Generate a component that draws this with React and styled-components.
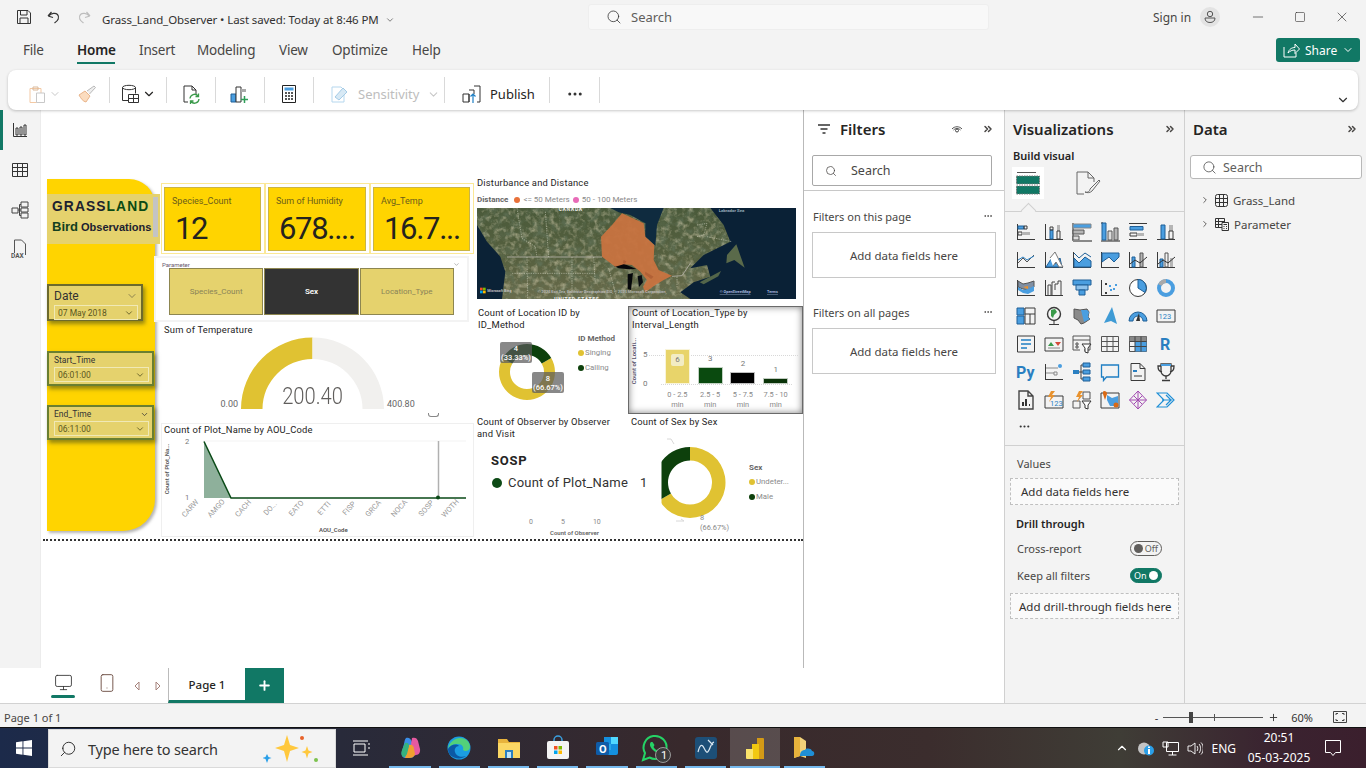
import React from 'react';
import styled, { createGlobalStyle } from 'styled-components';
import { ChevronDown, ChevronRight, ChevronsRight, Search, Minus, Square, X, MoreHorizontal, Plus, Monitor, Smartphone, ChevronUp } from 'lucide-react';

const UI = '"Noto Sans", "Open Sans", sans-serif';
const DIN = 'Roboto, "Noto Sans", sans-serif';
const GREEN = '#117865';
const BLUE = '#4a9ee0';
const DARK = '#3a3a3a';
const GREY = '#b5b5b5';

const Global = createGlobalStyle`
  html, body { margin: 0; padding: 0; height: 100%; overflow: hidden; background: #f3f3f3; }
  * { box-sizing: border-box; }
  body { font-family: ${UI}; color: #252423; }
`;

const Shell = styled.div`
  width: 1366px;
  height: 768px;
  display: flex;
  flex-direction: column;
  background: #f3f3f3;
  overflow: hidden;
`;

/* ---------- title bar ---------- */
const TitleBar = styled.div`
  height: 34px;
  flex: none;
  display: flex;
  align-items: center;
  padding-left: 16px;
`;
const QuickIcons = styled.div`
  display: flex;
  gap: 14px;
  width: 86px;
  align-items: center;
`;
const DocName = styled.div`
  width: 486px;
  padding-top: 5px;
  font-size: 11.5px;
  color: #323130;
  display: flex;
  align-items: center;
  gap: 6px;
  letter-spacing: -0.1px;
`;
const TopSearch = styled.div`
  width: 401px;
  height: 26px;
  background: #f8f8f8;
  border: 1px solid #eeeeee;
  border-radius: 3px;
  display: flex;
  align-items: center;
  gap: 9px;
  padding-left: 17px;
  font-size: 13px;
  color: #605e5c;
`;
const SignIn = styled.div`
  margin-left: 164px;
  width: 97px;
  display: flex;
  align-items: center;
  gap: 9px;
  font-size: 12px;
  color: #484644;
`;
const Avatar = styled.div`
  width: 20px;
  height: 20px;
  border-radius: 50%;
  background: #e3e3e3;
  display: flex;
  align-items: center;
  justify-content: center;
`;
const WinButtons = styled.div`
  display: flex;
  gap: 28px;
  align-items: center;
  color: #323130;
`;

/* ---------- tabs ---------- */
const TabRow = styled.div`
  height: 36px;
  flex: none;
  display: flex;
  align-items: center;
  padding: 0 6px 4px 23px;
`;
const Tab = styled.div`
  position: relative;
  width: ${p => p.$w}px;
  font-size: 13.5px;
  letter-spacing: -0.2px;
  color: ${p => (p.$active ? '#252423' : '#484644')};
  font-weight: ${p => (p.$active ? 600 : 400)};
  &::after {
    content: '';
    display: ${p => (p.$active ? 'block' : 'none')};
    position: absolute;
    left: 0;
    top: 21px;
    width: 38px;
    height: 2px;
    background: ${GREEN};
  }
`;
const ShareButton = styled.div`
  margin-left: auto;
  width: 84px;
  height: 24px;
  background: ${GREEN};
  border-radius: 3px;
  color: #fff;
  font-size: 12px;
  display: flex;
  align-items: center;
  gap: 5px;
  padding-left: 7px;
`;

/* ---------- ribbon ---------- */
const Ribbon = styled.div`
  height: 40px;
  flex: none;
  margin: 0 8px;
  background: #fff;
  border-radius: 8px;
  box-shadow: 0 1px 3px rgba(0, 0, 0, 0.22);
  display: flex;
  align-items: center;
  position: relative;
  z-index: 2;
`;
const RibbonSlot = styled.div`
  width: ${p => p.$w}px;
  height: 26px;
  padding: 8px 0 0 ${p => p.$left || 0}px;
  display: flex;
  align-items: center;
  justify-content: ${p => (p.$left ? 'flex-start' : 'center')};
  gap: ${p => p.$gap || 2}px;
  border-right: 1px solid #d9d9d9;
  font-size: 13px;
  color: ${p => (p.$faded ? '#bdbdbd' : '#252423')};
`;
const PainterSlot = styled.div`
  margin-left: 14px;
`;
const RibbonCollapse = styled.div`
  position: absolute;
  right: 8px;
  bottom: -2px;
  color: #333;
`;

/* ---------- workspace ---------- */
const Workspace = styled.div`
  flex: 1;
  display: flex;
  min-height: 0;
`;
const Rail = styled.div`
  width: 41px;
  flex: none;
  background: #f3f3f3;
  border-right: 1px solid #ececec;
  display: flex;
  flex-direction: column;
  position: relative;
`;
const RailItem = styled.div`
  height: 40px;
  display: flex;
  align-items: center;
  justify-content: center;
`;
const RailMark = styled.div`
  position: absolute;
  left: 0;
  top: 0;
  width: 3px;
  height: 40px;
  background: ${GREEN};
`;
const Main = styled.div`
  width: 963px;
  display: flex;
  flex-direction: column;
  background: #fff;
`;
const MainTop = styled.div`
  flex: 1;
  display: flex;
  min-height: 0;
`;
const Canvas = styled.div`
  width: 763px;
  position: relative;
  background: #fff;
  border-right: 1px solid #b9b9b9;
  height: 558px;
`;
const FiltersPane = styled.div`
  width: 200px;
  background: #fff;
  padding-top: 8px;
`;
const PaneHead = styled.div`
  display: flex;
  align-items: center;
  height: 22px;
  padding: ${p => p.$pad || '0 8px 0 8px'};
  font-size: ${p => p.$size || 15}px;
  font-weight: 600;
  color: #252423;
  gap: ${p => p.$gap || 0}px;
`;
const PushRight = styled.div`
  margin-left: auto;
  display: flex;
  align-items: center;
  gap: ${p => p.$gap || 0}px;
  color: #484644;
`;
const FilterSearch = styled.div`
  margin: 15px 12px 0 8px;
  height: 31px;
  border: 1px solid #a8a8a8;
  border-radius: 2px;
  display: flex;
  align-items: center;
  gap: 14px;
  padding-left: 12px;
  font-size: 12.5px;
  color: #484644;
`;
const FilterRule = styled.div`
  margin-top: 4px;
  height: 1px;
  background: #c8c8c8;
`;
const FilterSection = styled.div`
  display: flex;
  align-items: center;
  justify-content: space-between;
  padding: 0 11px 0 9px;
  height: 18px;
  margin-top: ${p => p.$top}px;
  font-size: 11px;
  color: #484644;
`;
const DropCard = styled.div`
  margin: 7px 8px 0;
  height: 46px;
  border: 1px solid #c8c8c8;
  display: flex;
  align-items: center;
  justify-content: center;
  font-size: 11.5px;
  color: #484644;
`;

const VizPane = styled.div`
  width: 181px;
  flex: none;
  border-left: 1px solid #d0d0d0;
  border-right: 1px solid #d0d0d0;
  padding-top: 8px;
`;
const DataPane = styled.div`
  width: 181px;
  flex: none;
  padding-top: 8px;
`;
const SubHead = styled.div`
  font-size: 11px;
  font-weight: 600;
  padding-left: ${p => p.$left || 8}px;
  margin-top: ${p => p.$top || 0}px;
`;
const BuildTabs = styled.div`
  margin: 4px 0 0 7px;
  display: flex;
  gap: 31px;
  align-items: center;
`;
const BuildActive = styled.div`
  width: 32px;
  height: 32px;
  background: #fff;
  display: flex;
  align-items: center;
  justify-content: center;
`;
const Notch = styled.div`
  height: 13px;
  position: relative;
  border-bottom: 1px solid #d0d0d0;
  &::after {
    content: '';
    position: absolute;
    left: 18px;
    bottom: -5px;
    width: 10px;
    height: 10px;
    background: #f3f3f3;
    border-top: 1px solid #d0d0d0;
    border-left: 1px solid #d0d0d0;
    transform: rotate(45deg);
  }
`;
const VizGrid = styled.div`
  display: grid;
  grid-template-columns: repeat(6, 28px);
  grid-auto-rows: 28px;
  padding: 6px 0 0 7px;
  align-items: center;
  justify-items: center;
`;
const VizDots = styled.div`
  height: 24px;
  padding-left: 13px;
  display: flex;
  align-items: center;
  color: #333;
`;
const VizRule = styled.div`
  margin-top: 7px;
  height: 1px;
  background: #d0d0d0;
`;
const DashedDrop = styled.div`
  margin: ${p => p.$top}px 5px 0;
  height: ${p => p.$h}px;
  background: #fafafa;
  border: 1px dashed #c0c0c0;
  display: flex;
  align-items: center;
  padding-left: ${p => p.$left || 10}px;
  font-size: 11.5px;
  color: #323130;
`;
const FieldLabel = styled.div`
  font-size: 11px;
  padding-left: 12px;
  color: #484644;
  margin-top: 10px;
`;
const ToggleRow = styled.div`
  display: flex;
  align-items: center;
  justify-content: space-between;
  padding: 0 22px 0 12px;
  height: 16px;
  margin-top: ${p => p.$top}px;
  font-size: 11px;
  color: #484644;
`;
const Toggle = styled.div`
  width: 32px;
  height: 15px;
  border-radius: 8px;
  border: 1px solid ${p => (p.$on ? GREEN : '#605e5c')};
  background: ${p => (p.$on ? GREEN : '#f3f3f3')};
  color: ${p => (p.$on ? '#fff' : '#605e5c')};
  font-size: 9px;
  line-height: 13px;
  display: flex;
  align-items: center;
  flex-direction: ${p => (p.$on ? 'row' : 'row-reverse')};
  justify-content: space-between;
  padding: 0 3px;
  &::after {
    content: '';
    width: 9px;
    height: 9px;
    border-radius: 50%;
    background: ${p => (p.$on ? '#fff' : '#605e5c')};
  }
`;
const DataSearch = styled.div`
  margin: 15px 4px 0 5px;
  height: 24px;
  background: #fff;
  border: 1px solid #b8b8b8;
  border-radius: 3px;
  display: flex;
  align-items: center;
  gap: 6px;
  padding-left: 11px;
  font-size: 12.5px;
  color: #605e5c;
`;
const TreeRow = styled.div`
  display: flex;
  align-items: center;
  gap: 5px;
  height: 24px;
  margin-top: ${p => p.$top || 0}px;
  padding-left: 15px;
  font-size: 11.5px;
  color: #484644;
`;

/* ---------- report visuals, placed on the report canvas ---------- */
const Visual = styled.div`
  position: absolute;
  left: ${p => p.$x - 41}px;
  top: ${p => p.$y - 110}px;
  width: ${p => p.$w}px;
  height: ${p => p.$h}px;
`;
const SidePanel = styled(Visual)`
  background: #ffd400;
  border-radius: 0 26px 32px 0;
  box-shadow: 2px 2px 3px rgba(90, 90, 90, 0.45);
  padding-top: 15px;
  font-family: ${DIN};
`;
const Brand = styled.div`
  width: 113px;
  height: 50px;
  background: #e5d26d;
  padding: 5px 0 0 5px;
  position: relative;
  &::after {
    content: '';
    position: absolute;
    right: 2px;
    top: 3px;
    width: 5px;
    height: 40px;
    background: #c4c4c4;
  }
`;
const BrandTop = styled.div`
  font: bold 13.8px "Liberation Sans", sans-serif;
  letter-spacing: 1.1px;
  color: #1c2130;
  span { color: #0a4a14; }
`;
const BrandSub = styled.div`
  margin-top: 5px;
  font: bold 11px "Liberation Sans", sans-serif;
  color: #1c2130;
  b { font-size: 13px; color: #123f20; margin-right: 3px; }
`;
const Slicer = styled.div`
  margin-top: ${p => p.$top}px;
  width: ${p => p.$w}px;
  height: ${p => p.$h}px;
  background: #e5d26d;
  border: 2px solid ${p => p.$line};
  box-shadow: 2px 3px 4px rgba(60, 70, 30, 0.55);
  padding: 0 3px 0 5px;
  color: #2a2a2a;
`;
const SlicerHead = styled.div`
  display: flex;
  justify-content: space-between;
  align-items: center;
  font-size: ${p => p.$size}px;
  height: ${p => p.$h}px;
  color: #333;
`;
const SlicerInput = styled.div`
  height: ${p => p.$h || 15}px;
  border: 1px solid #f0e9b6;
  display: flex;
  justify-content: space-between;
  align-items: center;
  padding: 0 3px;
  font-size: 8.5px;
  color: #5a5620;
`;
const CardFrame = styled(Visual)`
  border: 1px solid #fbe896;
  padding: 3px 3px 2px 2px;
  display: flex;
`;
const KpiCard = styled.div`
  flex: 1;
  background: #ffd400;
  border: 1px solid #c9b445;
  padding: 8px 0 0 7px;
  font-family: ${DIN};
`;
const KpiName = styled.div`
  font-size: 9px;
  color: #6b5d1c;
`;
const KpiValue = styled.div`
  font-size: 31px;
  line-height: 36px;
  margin: 5px 0 0 3px;
  color: #24231f;
  white-space: nowrap;
  letter-spacing: -1.3px;
`;
const ParamBox = styled(Visual)`
  background: #fff;
  border: 2px solid #f3f3f3;
  font-family: ${DIN};
`;
const ParamHead = styled.div`
  display: flex;
  justify-content: space-between;
  font-size: 6px;
  padding: 3px 7px 0 6px;
  height: 10px;
  color: #6a5a70;
`;
const ParamButtons = styled.div`
  display: flex;
  gap: 1px;
  margin: 0 0 0 13px;
  width: 285px;
  height: 47px;
`;
const ParamButton = styled.div`
  flex: 1;
  border: 1px solid #8d8650;
  background: ${p => (p.$on ? '#333333' : '#e5d26d')};
  color: ${p => (p.$on ? '#fff' : '#8a8458')};
  font-size: 8px;
  font-weight: ${p => (p.$on ? 600 : 400)};
  display: flex;
  align-items: center;
  justify-content: center;
`;
const VisualTitle = styled.div`
  font: 400 9.4px/12px ${DIN};
  letter-spacing: 0.2px;
  color: #252423;
  margin-bottom: ${p => p.$after || 0}px;
`;
const GaugeRow = styled.div`
  display: flex;
  align-items: flex-end;
  margin-top: 1px;
  padding-left: 56.5px;
  font-family: ${DIN};
  font-size: 9px;
  color: #666;
  gap: 3px;
`;
const GaugeWrap = styled.div`
  position: relative;
  width: 143px;
  height: 72px;
`;
const GaugeValue = styled.div`
  position: absolute;
  left: 0;
  right: 0;
  bottom: -1px;
  text-align: center;
  font: 300 24px/28px ${DIN};
  color: #605e5c;
  transform: scaleX(0.84);
`;
const GaugeEdge = styled.span`
  line-height: 9px;
`;
const ChartBox = styled(Visual)`
  border: 1px solid #efefef;
  padding-left: 2px;
  font-family: ${DIN};
`;
const MapLegend = styled.div`
  display: flex;
  align-items: center;
  gap: 3px;
  margin-top: 6px;
  font: 400 8px/9px ${DIN};
  color: #8a8a8a;
  b { color: #666; margin-right: 3px; }
`;
const Dot = styled.i`
  display: inline-block;
  flex: none;
  width: ${p => p.$size || 6}px;
  height: ${p => p.$size || 6}px;
  border-radius: 50%;
  background: ${p => p.$c};
`;
const MapFrame = styled.svg`
  display: block;
  margin-top: 4px;
`;
const Legend = styled.div`
  position: absolute;
  left: ${p => p.$x}px;
  top: ${p => p.$y}px;
  font: 400 7.8px/15px ${DIN};
  color: #8a8a8a;
  b { display: block; color: #666; font-size: 8px; line-height: 13px; }
`;
const LegendItem = styled.div`
  display: flex;
  align-items: center;
  gap: 1px;
`;
const DataTag = styled.div`
  position: absolute;
  left: ${p => p.$x}px;
  top: ${p => p.$y}px;
  width: 32px;
  height: 21px;
  background: rgba(90, 90, 90, 0.72);
  border-radius: 2px;
  color: #fff;
  font: 500 7.5px/9px ${DIN};
  text-align: center;
  padding-top: 2px;
`;
const BarBox = styled(Visual)`
  border: 1px solid #6a6a6a;
  box-shadow: inset 0 0 7px rgba(0, 0, 0, 0.5);
  padding: 0 3px;
  font-family: ${DIN};
`;
const BarAxisName = styled.div`
  position: absolute;
  left: -20px;
  top: 50px;
  width: 50px;
  text-align: center;
  transform: rotate(-90deg);
  font: 600 6px/8px ${DIN};
  color: #55506a;
  white-space: nowrap;
`;
const BarPlot = styled.div`
  position: absolute;
  left: 32px;
  top: 34px;
  width: 131px;
  height: 44px;
  display: flex;
  align-items: flex-end;
  border-bottom: 1px dotted #d8d8d8;
  &::before {
    content: '';
    position: absolute;
    left: -12px;
    right: -6px;
    top: 14px;
    border-top: 1px dotted #d8d8d8;
  }
`;
const BarSlot = styled.div`
  flex: 1;
  display: flex;
  flex-direction: column;
  align-items: center;
  justify-content: flex-end;
  position: relative;
  font-size: 8px;
  color: #777;
`;
const BarFill = styled.div`
  width: 25px;
  height: ${p => p.$h}px;
  background: ${p => p.$c};
  border: 1px solid rgba(255, 255, 255, 0.75);
  margin-top: 4px;
  display: flex;
  justify-content: center;
`;
const BarInnerTag = styled.div`
  margin-top: 4px;
  width: 13px;
  height: 12px;
  background: #f2ecc4;
  border-radius: 2px;
  text-align: center;
  line-height: 12px;
  font-size: 8px;
  color: #777;
`;
const AxisTick = styled.div`
  position: absolute;
  left: 14px;
  top: ${p => p.$y}px;
  font-size: 8px;
  color: #777;
`;
const BarLabels = styled.div`
  position: absolute;
  left: 32px;
  top: 83px;
  width: 131px;
  display: flex;
  font: 400 7.4px/10px ${DIN};
  color: #888;
  text-align: center;
  span { flex: 1; }
`;
const ObsHead = styled.div`
  font: 700 13px/16px ${DIN};
  letter-spacing: 0.8px;
  color: #252423;
  padding: 13px 0 0 14px;
`;
const ObsRow = styled.div`
  display: flex;
  align-items: center;
  padding-left: 15px;
  margin-top: 6px;
  font: 400 13px/16px ${DIN};
  color: #333;
  letter-spacing: 0.2px;
  white-space: nowrap;
`;
const ObsName = styled.span`
  margin-left: 6px;
`;
const ObsCount = styled.span`
  margin-left: 12px;
`;
const ObsAxis = styled.div`
  display: flex;
  gap: 28px;
  margin: 27px 0 0 52px;
  font: 400 7px/9px ${DIN};
  color: #888;
`;
const ObsAxisName = styled.div`
  margin: 2px 0 0 73px;
  font: 600 6px/8px ${DIN};
  color: #666;
`;
const SexNote = styled.div`
  position: absolute;
  left: 69px;
  top: 97px;
  font: 400 7.4px/10px ${DIN};
  color: #888;
  span { display: block; }
`;
const ResizeHint = styled(Visual)`
  border: 1px solid #888;
  border-top: none;
  border-radius: 0 0 3px 3px;
`;
const PageEnd = styled(Visual)`
  border-top: 2px dotted #333;
`;

/* ---------- page tabs, status bar, taskbar ---------- */
const PageBar = styled.div`
  height: 35px;
  flex: none;
  background: #fff;
  display: flex;
  align-items: stretch;
  margin-left: -41px;
  padding-left: 51px;
  position: relative;
`;
const ViewButton = styled.div`
  width: 24px;
  margin-left: ${p => p.$gap || 0}px;
  display: flex;
  justify-content: center;
  padding-top: 5px;
  position: relative;
  color: #333;
  &::after {
    content: '';
    display: ${p => (p.$on ? 'block' : 'none')};
    position: absolute;
    left: 0;
    right: 0;
    bottom: 5px;
    height: 3px;
    border-radius: 2px;
    background: ${GREEN};
  }
`;
const PageNav = styled.div`
  display: flex;
  align-items: center;
  gap: 15px;
  padding-left: 15px;
  width: 49px;
`;
const PageTab = styled.div`
  width: 77px;
  border-left: 1px solid #bbb;
  border-bottom: 3px solid ${GREEN};
  display: flex;
  align-items: center;
  justify-content: center;
  font-size: 11.5px;
  font-weight: 500;
  color: #252423;
`;
const AddPage = styled.div`
  width: 39px;
  background: ${GREEN};
  color: #fff;
  display: flex;
  align-items: center;
  justify-content: center;
`;
const StatusBar = styled.div`
  height: 24px;
  flex: none;
  border-top: 1px solid #d2d2d2;
  background: #f3f3f3;
  display: flex;
  align-items: center;
  padding: 3px 19px 0 4px;
  font-size: 11px;
  color: #484644;
  position: relative;
`;
const ZoomBar = styled.div`
  margin-left: auto;
  display: flex;
  align-items: center;
  color: #333;
`;
const ZoomTrack = styled.div`
  width: 100px;
  height: 1px;
  background: #555;
  margin: 0 5px 0 5px;
  position: relative;
  &::before {
    content: '';
    position: absolute;
    left: 26px;
    top: -5px;
    width: 4px;
    height: 11px;
    background: #444;
  }
  &::after {
    content: '';
    position: absolute;
    left: 51px;
    top: -3px;
    width: 1px;
    height: 7px;
    background: #555;
  }
`;
const ZoomValue = styled.span`
  margin: 0 20px 0 12px;
`;
const Taskbar = styled.div`
  height: 41px;
  flex: none;
  background: linear-gradient(90deg, #1c2a4a 0, #282a3a 25%, #38292c 50%, #3b2d2d 68%, #3f3d36 82%, #3a2330 93%, #3b1f2d 100%);
  border-top: 1px solid #111;
  display: flex;
  align-items: stretch;
  color: #fff;
`;
const StartButton = styled.div`
  width: 48px;
  display: flex;
  align-items: center;
  justify-content: center;
`;
const TaskSearch = styled.div`
  width: 288px;
  margin-top: 1px;
  background: #f3f3f3;
  border: 1px solid #dadada;
  display: flex;
  align-items: center;
  gap: 11px;
  padding-left: 10px;
  font-size: 14.5px;
  letter-spacing: -0.2px;
  color: #333;
`;
const SparkleIcon = styled.svg`
  margin-left: 34px;
`;
const TaskApps = styled.div`
  display: flex;
`;
const TaskApp = styled.div`
  width: 49.3px;
  display: flex;
  align-items: center;
  justify-content: center;
  position: relative;
  background: ${p => (p.$active ? 'rgba(255,255,255,0.16)' : 'none')};
  &::after {
    content: '';
    display: ${p => (p.$open ? 'block' : 'none')};
    position: absolute;
    left: ${p => (p.$active ? 0 : 4)}px;
    right: ${p => (p.$active ? 0 : 4)}px;
    bottom: 0;
    height: 2px;
    background: #76b9ed;
  }
`;
const Tray = styled.div`
  margin-left: auto;
  display: flex;
  align-items: center;
  gap: 8px;
  padding-right: 25px;
  font-size: 12px;
`;
const ClockBox = styled.div`
  width: 70px;
  margin: 0 3px 0 0;
  text-align: center;
  font-size: 12px;
  line-height: 20px;
  white-space: nowrap;
`;

/* ---------- drawings ---------- */
const Ico = ({ s = 20, w, h, children, vb = '0 0 20 20' }) => (
  <svg width={w || s} height={h || s} viewBox={vb} fill="none" style={{ display: 'block', flex: 'none' }}>{children}</svg>
);

const SaveIcon = () => (
  <Ico s={16} vb="0 0 16 16"><path d="M1.5 1.5h10.500l2.500 2.500v10.500h-13z M4.500 1.500v4.500h6.500v-4.500 M4 14.500v-5.500h8v5.500" stroke="#333" /></Ico>
);
const UndoIcon = () => (
  <Ico s={16} vb="0 0 16 16"><path d="M2 7l3.500-4 M2 7l5 1.500 M2.500 7c3-3 7-3.500 9-1.500c2.500 3 .5 6-3 8.500" stroke="#333" strokeWidth="1.200" /></Ico>
);
const RedoIcon = () => (
  <Ico s={16} vb="0 0 16 16"><path d="M14 7l-3.500-4 M14 7l-5 1.500 M13.500 7c-3-3-7-3.500-9-1.500c-2.500 3-.5 6 3 8.500" stroke="#bdbdbd" strokeWidth="1.200" /></Ico>
);

const RailChart = () => (
  <Ico s={16} vb="0 0 16 16"><path d="M1.500 1v13.500h13.500 M4 13v-7h2v7z M8 13v-8h2v8z M12 13v-10h2v10z" stroke="#333" /></Ico>
);
const RailTable = () => (
  <Ico s={16} vb="0 0 16 16"><path d="M.5 1.500h15v13h-15z M.5 5.500h15 M.5 9.500h15 M5.500 1.500v13 M10.500 1.500v13" stroke="#333" /></Ico>
);
const RailModel = () => (
  <Ico s={18} vb="0 0 18 18"><path d="M1 7h6v5h-6z M10 1h7v5h-7z M10 7h7v4h-7z M10 12h7v5h-7z M7 9h3 M8.500 3.500v11 M8.500 3.500h1.500 M8.500 14.500h1.500" stroke="#444" /></Ico>
);
const RailDax = () => (
  <svg width="18" height="22" viewBox="0 0 18 22" fill="none" style={{ display: 'block' }}>
    <path d="M3.500 14v-13h7l4 4v11" stroke="#555" />
    <text x="0" y="19" fontFamily={DIN} fontSize="6.500" fontWeight="700" fill="#555">DAX</text>
  </svg>
);

const PasteIcon = () => (
  <Ico vb="0 0 20 20"><path d="M3 4.500h11v14h-11z" stroke="#f3c9a4" /><path d="M6 3h5v3h-5z" stroke="#d9b89a" /><path d="M9.500 9h8v9.500h-8z" stroke="#c8c8c8" fill="#fff" /></Ico>
);
const PainterIcon = () => (
  <Ico vb="0 0 20 20"><path d="M2 11l6-4 5 5-4 6c-3-.5-5-3.500-7-7z" fill="#fbdcbf" stroke="#e9b48a" /><path d="M10 7l7-5 1.500 1.500-6 6.500" stroke="#b9b9b9" fill="#eee" /></Ico>
);
const DataIcon = () => (
  <Ico vb="0 0 20 20"><ellipse cx="9" cy="3.500" rx="6.500" ry="2.200" stroke="#333" /><path d="M2.500 3.500v13h6 M15.500 3.500v6" stroke="#333" /><path d="M8.500 10.500h10v8h-10z M8.500 14.500h10 M13.500 10.500v8" stroke="#333" /></Ico>
);
const RefreshIcon = () => (
  <Ico vb="0 0 20 20"><path d="M7 18h-4v-16h8l4 4v5 M11 2v4h4" stroke="#333" /><path d="M9 14.500a4.500 4.500 0 0 1 8-2.500 M17.500 9.500v3h-3 M18 15a4.500 4.500 0 0 1-8 2.500 M9.500 20v-3h3" stroke="#3a9a4a" strokeWidth="1.300" /></Ico>
);
const NewVisualIcon = () => (
  <Ico vb="0 0 20 20"><path d="M1 10h5v8h-5z" fill={BLUE} stroke="#1f5f96" /><path d="M6 3h5v15h-5z" fill="#fff" stroke="#333" /><path d="M11 5h5v3h-5z" fill="#aaa" /><path d="M14.500 12v7 M11 15.500h7" stroke="#2f9e58" strokeWidth="1.500" /></Ico>
);
const CalcIcon = () => (
  <Ico vb="0 0 20 20"><path d="M3.500 1.500h13v17h-13z" stroke="#222" /><path d="M5.500 3.500h9v3h-9z" fill={BLUE} /><path d="M6 9h2M9 9h2M12 9h2M6 12h2M9 12h2M12 12h2M6 15h2M9 15h2M12 15h2" stroke="#222" strokeWidth="1.600" /></Ico>
);
const SensIcon = () => (
  <Ico vb="0 0 20 20"><path d="M2 3h9l3 3v12h-12z" stroke="#b5d7ee" /><path d="M5 13l8-9 4 4-8 8z" fill="#d7e9f5" stroke="#a4cbe6" /></Ico>
);
const PublishIcon = () => (
  <Ico vb="0 0 20 20"><path d="M1 10h6v8h-6z M7 6h5v4 M12 2h6v16h-3 M7 10v8" stroke="#333" /><path d="M11 19v-9 M8.500 12.500l2.500-2.500 2.500 2.500" stroke="#1f7fc4" strokeWidth="1.200" /></Ico>
);
const ShareIcon = () => (
  <Ico s={17} vb="0 0 17 17"><path d="M1 5v10h12v-4 M5 11c1-4 4-5.500 7-5.500v-3.500l4.500 5-4.500 4.500v-3.500c-3 0-5 1-7 3z" stroke="#fff" /></Ico>
);
const FilterIcon = () => (
  <Ico s={14} vb="0 0 14 14"><path d="M1 3h12M3.500 7h7M5.500 11h3" stroke="#333" strokeWidth="1.300" /></Ico>
);
const EyeIcon = () => (
  <Ico s={12} vb="0 0 12 12"><path d="M1 6c2.500-3 7.500-3 10 0M2.500 7c2-2 5-2 7 0" stroke="#555" /><circle cx="6" cy="7.500" r="1.500" stroke="#444" /></Ico>
);
const BuildIcon = () => (
  <Ico s={26} vb="0 0 26 26"><path d="M2 2.500h19" stroke="#555" /><path d="M1.500 6h23v8h-23z" fill={GREEN} stroke="#777" strokeDasharray="1.500 1" /><path d="M1.500 16h23v8h-23z" fill={GREEN} stroke="#777" strokeDasharray="1.500 1" /></Ico>
);
const FormatIcon = () => (
  <Ico s={26} vb="0 0 26 26"><path d="M9 24h-7v-22h11l6 6v4 M13 2v6h6" stroke="#666" /><path d="M10 22c3 1 5-1 5-3l9-9 1 1-8 10c-2 2-5 2-7 1z" stroke="#666" /></Ico>
);
const TableGlyph = () => (
  <Ico s={13} vb="0 0 13 13"><rect x=".5" y=".5" width="12" height="12" rx="2" stroke="#333" /><path d="M.5 4.500h12M.5 8.500h12M4.500 .5v12M8.500 .5v12" stroke="#333" /></Ico>
);
const CalcTableGlyph = () => (
  <Ico s={14} vb="0 0 14 14"><path d="M.5 1.500h9v9h-9zM.5 4.500h9M.5 7.500h9M3.500 1.500v9" stroke="#333" /><path d="M7 5.500h6.500v8h-6.500z" fill="#f3f3f3" stroke="#333" /><path d="M8.500 7.500h3.500M8.500 9.500h1M11 9.500h1M8.500 11.500h1M11 11.500h1" stroke="#333" /></Ico>
);
const NavArrow = ({ flip }) => (
  <Ico w={6} h={10} vb="0 0 6 10"><path d={flip ? 'M1 1l4 4-4 4z' : 'M5 1l-4 4 4 4z'} stroke="#a5817b" /></Ico>
);

const Axis = () => <path d="M1 17.500h18M1.500 2v15.500" stroke={DARK} />;

const vizIcons = [
  <><Axis /><path d="M2 4h6v3h-6z" fill={BLUE} stroke="#1f5f96" /><path d="M8 4h3v3h-3zM2 10h4v3h-4z" stroke={DARK} /><path d="M6 10h8v3h-8z" fill={GREY} /></>,
  <><Axis /><path d="M6 8h3v9h-3z" fill={BLUE} stroke="#1f5f96" /><path d="M13 3h3v6h-3z" fill={GREY} /><path d="M13 9h3v8h-3zM6 5h3v3h-3z" stroke={DARK} /></>,
  <><path d="M1 1v18" stroke="#888" strokeWidth="2" /><path d="M1 2h18v4h-18z" fill={BLUE} stroke="#888" /><path d="M1 8h11v4h-11z" fill={GREY} stroke="#555" /><path d="M1 14h6v4h-6z" fill="#ddd" stroke="#555" /><path d="M1 19h19" stroke="#888" strokeWidth="2" /></>,
  <><path d="M1 19h19M1 1h2" stroke="#888" strokeWidth="2" /><path d="M2 1h4v17h-4z" fill={BLUE} stroke="#1f5f96" /><path d="M8 9h4v9h-4z" fill="#ddd" stroke="#555" /><path d="M14 6h4v12h-4z" fill={GREY} stroke="#555" /></>,
  <><path d="M1 1.500h18M1 17.500h18" stroke={DARK} /><path d="M2 4.500h13v3.500h-13z" fill={BLUE} stroke="#1f5f96" /><path d="M2 11h7v3h-7z" stroke={DARK} /><path d="M9 11h7v3h-7z" fill={GREY} /></>,
  <><path d="M1 17.500h18" stroke={DARK} /><path d="M5 3h4v14h-4z" fill={BLUE} stroke="#1f5f96" /><path d="M13 3h4v6h-4z" fill={GREY} /><path d="M13 9h4v8h-4z" stroke={DARK} /></>,
  <><Axis /><path d="M2 13l5-5 4 4 7-7" stroke="#555" /><path d="M2 10l5-3 4 3 7-4" stroke="#2a7fc1" /></>,
  <><Axis /><path d="M2 17l5-8 4 5 5-6 2 9z" fill={BLUE} stroke="#1f5f96" /><path d="M6 8l5-6 6 12 2 3h-4l-3-5-3 4" fill="#fff" stroke="#777" /></>,
  <><Axis /><path d="M2 8l5 5 6-6 6 4v6h-17z" fill={BLUE} stroke="#1f5f96" /><path d="M2 3l5 5 6-5 6 4" stroke="#1f5f96" /></>,
  <><Axis /><path d="M2 3h17v4l-5 5-5-5-7 5z" fill={BLUE} stroke="#1f5f96" /></>,
  <><Axis /><path d="M4 7h3v10h-3z" fill={BLUE} stroke="#1f5f96" /><path d="M12 3h3v14h-3z" fill={GREY} stroke="#555" /><path d="M2 14l5-4 5 3 7-6" stroke="#333" /></>,
  <><Axis /><path d="M4 9h3v8h-3z" fill={BLUE} stroke="#1f5f96" /><path d="M9 3h3v14h-3z" stroke="#555" /><path d="M14 8h3v9h-3z" fill={GREY} /><path d="M2 14l5-4 5 3 7-6" stroke="#333" /></>,
  <><Axis /><path d="M2 3l5 3 5-1 6-2v6l-6 3-5-1-5-2z" fill="#7f8fa3" stroke="#555" /><path d="M2 9l5 3 5-1 6-3v5l-6 3-5-1-5-3z" fill={BLUE} /><path d="M7 9l5-1v3z" fill="#e8922e" /></>,
  <><Axis /><path d="M4 17v-10h3v10M8 17v-13h3M11 12v-6h3v-3h3v14" stroke="#444" /></>,
  <><path d="M1 2h18v5h-18z" fill={BLUE} stroke="#1f5f96" /><path d="M4 7h12v5h-12z" fill="#8ec2ec" stroke="#1f5f96" /><path d="M7 12h6v5h-6z" fill={BLUE} stroke="#1f5f96" /></>,
  <><Axis /><path d="M5 14h2v2h-2zM5 5h2v2h-2z" fill={DARK} /><path d="M9 7h2v2h-2zM13 10h2v2h-2zM15 6h2v2h-2zM10 11h2v2h-2z" fill={BLUE} /></>,
  <><circle cx="10" cy="10" r="8.500" stroke={DARK} fill="#fff" /><path d="M10 10v-8.500a8.500 8.500 0 0 1 7 13z" fill={BLUE} stroke="#1f5f96" /></>,
  <><circle cx="10" cy="10" r="7" stroke={BLUE} strokeWidth="4" /><path d="M10 3a7 7 0 0 0-6 4" stroke="#aaa" strokeWidth="4" /></>,
  <><path d="M1 2h7v7h-7zM1 10h7v8h-7z" fill={BLUE} stroke="#1f5f96" /><path d="M9 2h10v16h-10zM9 8h10M14 8v10" stroke={DARK} /></>,
  <><circle cx="10" cy="8" r="6.500" stroke={DARK} strokeWidth="1.400" /><path d="M7 4l4-1 2 3-3 3-1 3-2-2z" fill="#3a9a4a" /><path d="M10 15v3M5 18.500h10" stroke={DARK} /></>,
  <><path d="M2 3l6 1 7-1 2 3-1 5 2 2-6 4-3 1-3-4-4-2z" fill="#8a8a8a" stroke="#555" /><path d="M9 4h6l2 2-1 5 2 2-6 3z" fill={BLUE} /></>,
  <path d="M12 1l5 17-6-3-7 2z" fill="#3f9bd5" />,
  <><path d="M1 15a9 9 0 0 1 18 0h-4a5 5 0 0 0-10 0z" fill={BLUE} stroke="#1f5f96" /><path d="M8 15l3-8 1 8z" fill="#333" /></>,
  <><path d="M1 4h18v12h-18z" stroke={DARK} /><text x="2.500" y="13" fontFamily={DIN} fontSize="7.500" fill="#2a7fc1">123</text></>,
  <><path d="M1.500 2h17v16h-17z" stroke={DARK} /><path d="M5 6h10M5 10h10M5 14h6" stroke="#1f7fc4" strokeWidth="1.500" /></>,
  <><path d="M1 4h18v13h-18z" stroke={DARK} /><path d="M4 12l3-4 3 4z" fill="#3a9a4a" /><path d="M11 8h6l-3 4z" fill="#d34a3a" /><path d="M4 14h12" stroke="#888" /></>,
  <><path d="M1 2h17v14h-6M1 2v14h7M1 6h17" stroke="#555" /><path d="M4 9h2v2h-2zM4 12h2v2h-2z" stroke="#555" /><path d="M10 10h9l-3 4v5l-3-1v-4z" fill="#fff" stroke="#333" /></>,
  <path d="M1.500 2.500h17v15h-17zM1.500 7.500h17M1.500 12.500h17M7 2.500v15M13 2.500v15" stroke="#555" />,
  <><path d="M1.500 2.500h17v15h-17z" stroke="#555" /><path d="M7 7.500h11.500v10h-11.500z" fill={BLUE} /><path d="M1.500 2.500h17v5h-17z" fill="#888" /><path d="M1.500 7.500h17M1.500 12.500h17M7 2.500v15M13 2.500v15" stroke="#444" /></>,
  <text x="4" y="16" fontFamily={DIN} fontSize="16" fontWeight="700" fill="#2a7fc1">R</text>,
  <text x="0" y="16" fontFamily={DIN} fontSize="16" fontWeight="700" fill="#2a7fc1">Py</text>,
  <><Axis /><path d="M2 6h12M2 11h8" stroke="#888" /><circle cx="16" cy="4" r="2" fill={BLUE} /><path d="M10 10h3v3h-3z" stroke="#888" /></>,
  <><path d="M1 8h6v4h-6z" fill="#2a7fc1" /><path d="M7 10h2M9 3v14M9 3h2M9 10h2M9 17h2" stroke={DARK} /><path d="M11 1h7v4h-7zM11 8h7v4h-7zM11 15h7v4h-7z" fill={BLUE} stroke="#1f5f96" /></>,
  <path d="M1.500 3h17v12h-12l-3 3.500v-3.500h-2z" stroke="#1f7fc4" strokeWidth="1.300" />,
  <><path d="M3 1.500h9l5 5v12h-14z M12 1.500v5h5" stroke={DARK} /><path d="M5 8h4v2h-4z" fill="#2a7fc1" /><path d="M6 14h8" stroke={DARK} /></>,
  <><path d="M5 2h10v7a5 5 0 0 1-10 0z" stroke={DARK} strokeWidth="1.300" /><path d="M5 2h10v2h-10z" fill={BLUE} /><path d="M5 4h-3c0 4 1 5 4 6M15 4h3c0 4-1 5-4 6M10 14v3M6 18.500h8" stroke={DARK} strokeWidth="1.300" /></>,
  <><path d="M3 1h9l5 5v13h-14z M12 1v5h5" stroke="#444" strokeWidth="1.400" /><path d="M6 16h2v-4h-2zM9 16h2v-7h-2zM13 16h1v-2h-1z" fill="#333" /></>,
  <><path d="M1 6h18v12h-18z" stroke={DARK} /><path d="M7 1h4l-3 4h3l-6 7 2-5h-3z" fill="#e8922e" /><text x="6" y="16" fontFamily={DIN} fontSize="7.500" fill="#2a7fc1">123</text></>,
  <><path d="M11 2h7v7h-7zM1 11h7v7h-7z" stroke="#555" /><path d="M7 1h4l-3 4h3l-6 7 2-5h-3z" fill="#e8922e" /><path d="M10 11h9l-3 4v4l-3-1v-3z" fill="#fff" stroke="#333" /></>,
  <><path d="M1 3h18v15h-18z" stroke={DARK} /><path d="M7 5l5 3 6-2v10h-8l-3-6z" fill={BLUE} /><path d="M4 1c2 0 3 1 3 3l-2 6-2-6c0-2 0-3 1-3z" fill="#d96a16" /><circle cx="16" cy="15" r="2.500" fill="#d96a16" /></>,
  <path d="M10 1l8.500 9-8.500 9-8.500-9zM10 1v18M1.500 10h17M6 6l8 8M14 6l-8 8" stroke="#a14ab0" />,
  <path d="M1 3h10l7 7-7 7h-10l7-7zM6 10h9l-5-5M6 10h9l-5 5" stroke="#1f8fd6" strokeWidth="1.200" />
];

const ring = (cx, cy, R, r, a0, a1) => {
  const pt = (rad, a) => {
    const t = ((a - 90) * Math.PI) / 180;
    return `${(cx + rad * Math.cos(t)).toFixed(2)} ${(cy + rad * Math.sin(t)).toFixed(2)}`;
  };
  const large = a1 - a0 > 180 ? 1 : 0;
  return `M${pt(R, a0)}A${R} ${R} 0 ${large} 1 ${pt(R, a1)}L${pt(r, a1)}A${r} ${r} 0 ${large} 0 ${pt(r, a0)}Z`;
};

const SatelliteMap = () => (
  <MapFrame width="319" height="91" viewBox="0 9 957 273">
    <defs>
      <filter id="grainDark" x="0" y="0" width="100%" height="100%">
        <feTurbulence type="fractalNoise" baseFrequency="0.04" numOctaves="4" seed="7" />
        <feColorMatrix values="0 0 0 0 0.12  0 0 0 0 0.17  0 0 0 0 0.1  2.4 0 0 0 -1" />
      </filter>
      <filter id="grainTan" x="0" y="0" width="100%" height="100%">
        <feTurbulence type="fractalNoise" baseFrequency="0.06" numOctaves="3" seed="21" />
        <feColorMatrix values="0 0 0 0 0.62  0 0 0 0 0.58  0 0 0 0 0.4  0 2.6 0 0 -1.2" />
      </filter>
      <linearGradient id="land" x1="0" y1="0" x2="0" y2="1">
        <stop offset="0" stopColor="#4a5a3a" />
        <stop offset="0.55" stopColor="#56603f" />
        <stop offset="1" stopColor="#6a6c4c" />
      </linearGradient>
    </defs>
    <rect x="0" y="9" width="957" height="273" fill="url(#land)" />
    <rect x="0" y="9" width="957" height="273" filter="url(#grainDark)" opacity="0.8" />
    <rect x="0" y="9" width="957" height="273" filter="url(#grainTan)" opacity="0.55" />
    <path d="M700 9H957V282H640L610 262L650 232L700 215L690 180L640 190L680 150L760 110L740 60Z" fill="#0a2136" />
    <path d="M0 60L30 110L70 155L85 200L75 282H0Z" fill="#0b2236" />
    <path d="M400 9H560L540 60L535 122L505 95L505 55L460 30L425 22Z" fill="#0f2b3f" />
    <path d="M750 150L778 118L803 188L772 165L748 175Z" fill="#5a6a4a" />
    <path d="M668 232L732 198L724 214L680 238Z" fill="#54664a" />
    <path d="M90 156H375M585 214L615 212L640 175" stroke="#a8a79a" strokeWidth="3" fill="none" />
    <path d="M120 10L135 100L175 125L180 156M205 20L215 156M285 156V280M150 156L152 280M350 156L355 235M395 190L420 280M600 215V250M660 60L690 55L680 90L660 95M690 95L765 110M105 205H355" stroke="#e6e6d8" strokeWidth="1.600" strokeDasharray="4 3" opacity="0.85" fill="none" />
    <path d="M410 182L440 176L478 192L455 193L425 190Z" fill="#05070a" />
    <path d="M452 208L468 204L462 255L452 252Z" fill="#05070a" />
    <path d="M482 214L494 210L498 232L486 246Z" fill="#0a0d12" />
    <path d="M435 25L500 55L505 95L532 120L530 165L545 195L585 212L560 225L535 240L505 262L498 245L510 225L490 200L465 180L440 178L415 185L375 155L372 95L405 60Z" fill="#c97340" opacity="0.94" />
    <path d="M440 165l8 4-4 8-6-4zM505 200l25 15-8 7-18-14z" fill="#a95a32" opacity="0.7" />
    <text x="245" y="19" fontFamily={DIN} fontSize="15" fontWeight="700" letterSpacing="2" fill="#eeeeee">CANADA</text>
    <text x="725" y="21" fontFamily={DIN} fontSize="13" fontWeight="600" fill="#9fb2bf">Labrador Sea</text>
    <text x="232" y="288" fontFamily={DIN} fontSize="15" fontWeight="700" letterSpacing="2" fill="#eeeeee">UNITED STATES</text>
    <rect x="9" y="248" width="8" height="8" fill="#f25022" /><rect x="18" y="248" width="8" height="8" fill="#7fba00" />
    <rect x="9" y="257" width="8" height="8" fill="#00a4ef" /><rect x="18" y="257" width="8" height="8" fill="#ffb900" />
    <text x="31" y="260" fontFamily={DIN} fontSize="11" fontWeight="600" fill="#c9c9c9">Microsoft Bing</text>
    <text x="182" y="265" fontFamily={DIN} fontSize="11.500" fontWeight="600" fill="#b9b9b9">© 2025 Esri Sea, Earthstar Geographics SIO, © 2025 Microsoft Corporation,</text>
    <text x="728" y="265" fontFamily={DIN} fontSize="11.500" fontWeight="600" fill="#aebfe0" textDecoration="underline">© OpenStreetMap</text>
    <text x="870" y="265" fontFamily={DIN} fontSize="11.500" fontWeight="600" fill="#aebfe0" textDecoration="underline">Terms</text>
  </MapFrame>
);

const PlotChart = () => {
  const labels = [['CARW', 28], ['AMGO', 54], ['CACH', 81], ['DO...', 108], ['EATO', 134], ['ETTI', 162], ['FISP', 187], ['GRCA', 211], ['NOCA', 237], ['SOSP', 264], ['WOTH', 288]];
  return (
    <svg width="309" height="99" viewBox="0 0 309 99" style={{ display: 'block' }}>
      <path d="M39 3H302" stroke="#f3f3f3" />
      <path d="M40 3.500L67 60H40Z" fill="#8eb09b" />
      <path d="M274.500 3V60" stroke="#b0b0b0" strokeWidth="1.500" />
      <path d="M40 3.500L67 60H302" stroke="#0a4a17" strokeWidth="1.500" fill="none" />
      <circle cx="274" cy="59.500" r="2" fill="#0a4a17" />
      <text x="21" y="6" fontFamily={DIN} fontSize="7.500" fill="#777">2</text>
      <text x="21" y="62" fontFamily={DIN} fontSize="7.500" fill="#777">1</text>
      <text transform="translate(5 31) rotate(-90)" textAnchor="middle" fontFamily={DIN} fontSize="6" fontWeight="600" fill="#555">Count of Plot_Na...</text>
      {labels.map(([t, x]) => (
        <text key={t} transform={`translate(${x} 72) rotate(-48)`} textAnchor="middle" fontFamily={DIN} fontSize="7.500" fill="#999">{t}</text>
      ))}
      <text x="155" y="94" fontFamily={DIN} fontSize="6" fontWeight="600" fill="#555">AOU_Code</text>
    </svg>
  );
};

const apps = [
  <Ico s={20} vb="0 0 20 20"><path d="M2 3h15M2 17h15M3 6h11v8h-11zM18 5v2M18 9v2" stroke="#fff" /></Ico>,
  <Ico s={26} vb="0 0 26 26">
    <path d="M9 3c3-1 5 1 6 4l3 12c-1 3-3 4-6 4h-4c-3 0-4-4-3-7l2-7c.5-3 1-5 2-6z" fill="#3a8ee8" />
    <path d="M15 3c3-1 5 0 6 3l2 8c.5 3-1 6-4 6l-3 1-2-12z" fill="#e65aa0" />
    <path d="M12 10c3-1 5 1 5 4l1 5c-1 3-3 4-6 4h-4z" fill="#f0a030" />
    <path d="M8 8c2-1 4 0 4 3l-2 8c-1 2-2 3-4 3-2-2-2-4-1-7z" fill="#36b37e" />
  </Ico>,
  <Ico s={26} vb="0 0 26 26">
    <circle cx="13" cy="13" r="11.500" fill="#1b9de2" />
    <path d="M2 14C3 7 9 3 14 3c6 0 10 4 10 9 0 4-5 5-7 3 1-3-1-6-5-6-5 0-9 2-10 5z" fill="#53d17a" />
    <path d="M2 14c2-4 8-6 11-3-3 0-5 3-4 6 1 4 6 6 11 4-6 5-18 2-18-7z" fill="#0c59a4" />
  </Ico>,
  <Ico s={26} vb="0 0 26 26">
    <path d="M2 4h9l2 3h11v16h-22z" fill="#e8b33c" />
    <path d="M2 8h22v15h-22z" fill="#fbd764" />
    <path d="M9 15h8v8h-8z" fill="#2a7fc1" /><path d="M11 17h4v6h-4z" fill="#bfe3f7" />
  </Ico>,
  <Ico s={26} vb="0 0 26 26">
    <path d="M9 7v-2a4 4 0 0 1 8 0v2" stroke="#3aa0e0" strokeWidth="1.500" />
    <rect x="2" y="6" width="22" height="18" rx="2" fill="#f4f4f4" />
    <path d="M9 11h3.500v3.500h-3.500z" fill="#f25022" /><path d="M13.500 11h3.500v3.500h-3.500z" fill="#7fba00" />
    <path d="M9 15.500h3.500v3.500h-3.500z" fill="#00a4ef" /><path d="M13.500 15.500h3.500v3.500h-3.500z" fill="#ffb900" />
  </Ico>,
  <Ico s={26} vb="0 0 26 26">
    <path d="M10 2h12a2 2 0 0 1 2 2v14a2 2 0 0 1-2 2h-12z" fill="#1490df" />
    <path d="M17 2h7v7h-7z" fill="#50d9ff" /><path d="M10 9h7v6h-7z" fill="#28a8ea" />
    <rect x="2" y="7" width="13" height="13" rx="1.500" fill="#0f5ca8" />
    <text x="5" y="17.500" fontFamily={DIN} fontSize="11" fontWeight="700" fill="#fff">O</text>
  </Ico>,
  <Ico s={30} vb="0 0 30 30">
    <path d="M2 27l2-7a11.500 11.500 0 1 1 4.500 4.500z" stroke="#25d366" strokeWidth="2" />
    <path d="M10 9c-2 2-1 5 2 8s6 4 8 2l-2.500-3-2 1c-1-.5-2.500-2-3-3l1-2-2-3z" fill="#25d366" />
    <circle cx="22" cy="22" r="7.500" fill="#3c3c3c" stroke="#9a9a9a" />
    <text x="20" y="26" fontFamily={DIN} fontSize="11" fill="#fff">1</text>
  </Ico>,
  <Ico s={26} vb="0 0 26 26">
    <rect x="2" y="2" width="22" height="22" rx="3" fill="#1d4f78" />
    <path d="M5 17c2-8 4-8 6-4s3 6 5 2 2-7 5-8M15 5l5 5" stroke="#dbe8f2" strokeWidth="1.200" />
  </Ico>,
  <Ico s={26} vb="0 0 26 26">
    <path d="M15 3h6a1 1 0 0 1 1 1v20h-7z" fill="#d39a16" />
    <path d="M10 9h7v15h-7z" fill="#f2c811" />
    <path d="M4 14h7v10h-6a1 1 0 0 1-1-1z" fill="#fae36b" />
  </Ico>,
  <Ico s={26} vb="0 0 26 26">
    <path d="M3 2h6l6 4v17l-6-2-6 2z" fill="#f1d27a" />
    <path d="M3 2h6v19l-6 2z" fill="#e8b33c" />
    <path d="M9 21c0-4 2-6 5-6 1-2 6-2 7 1 3 0 3 5 0 5z" fill="#1f8fd6" />
  </Ico>
];

export default function App() {
  const tabs = [['File', 54], ['Home', 62], ['Insert', 58], ['Modeling', 82], ['View', 53], ['Optimize', 80], ['Help', 50]];
  return (
    <Shell>
      <Global />
      <TitleBar>
        <QuickIcons><SaveIcon /><UndoIcon /><RedoIcon /></QuickIcons>
        <DocName>Grass_Land_Observer  •  Last saved: Today at 8:46 PM <ChevronDown size={10} color="#666" /></DocName>
        <TopSearch><Search size={16} strokeWidth={1.200} color="#333" />Search</TopSearch>
        <SignIn>Sign in<Avatar><svg width="14" height="14" viewBox="0 0 14 14" fill="none"><circle cx="7" cy="4" r="2.700" stroke="#555" /><path d="M2 8h10c0 3-2 4.500-5 4.500s-5-1.500-5-4.500z" stroke="#555" /></svg></Avatar></SignIn>
        <WinButtons>
          <Minus size={16} strokeWidth={1} />
          <Square size={12} strokeWidth={1.200} />
          <X size={16} strokeWidth={1} />
        </WinButtons>
      </TitleBar>

      <TabRow>
        {tabs.map(([t, w]) => <Tab key={t} $w={w} $active={t === 'Home'}>{t}</Tab>)}
        <ShareButton><ShareIcon />Share<ChevronDown size={12} /></ShareButton>
      </TabRow>

      <Ribbon>
        <RibbonSlot $w={102} $left={19}>
          <PasteIcon /><ChevronDown size={12} color="#c8c8c8" /><PainterSlot><PainterIcon /></PainterSlot>
        </RibbonSlot>
        <RibbonSlot $w={57}><DataIcon /><ChevronDown size={14} /></RibbonSlot>
        <RibbonSlot $w={49}><RefreshIcon /></RibbonSlot>
        <RibbonSlot $w={49}><NewVisualIcon /></RibbonSlot>
        <RibbonSlot $w={49}><CalcIcon /></RibbonSlot>
        <RibbonSlot $w={131} $left={16} $faded $gap={8}><SensIcon />Sensitivity<ChevronDown size={13} color="#c8c8c8" /></RibbonSlot>
        <RibbonSlot $w={105} $left={17} $gap={8}><PublishIcon />Publish</RibbonSlot>
        <RibbonSlot $w={50}><MoreHorizontal size={18} color="#333" /></RibbonSlot>
        <RibbonCollapse><ChevronDown size={14} strokeWidth={2} /></RibbonCollapse>
      </Ribbon>

      <Workspace>
        <Rail>
          <RailMark />
          <RailItem><RailChart /></RailItem>
          <RailItem><RailTable /></RailItem>
          <RailItem><RailModel /></RailItem>
          <RailItem><RailDax /></RailItem>
        </Rail>
        <Main>
          <MainTop>
            <Canvas>
              <SidePanel $x={47} $y={179} $w={108} $h={352}>
                <Brand>
                  <BrandTop>GRASS<span>LAND</span></BrandTop>
                  <BrandSub><b>Bird</b>Observations</BrandSub>
                </Brand>
                <Slicer $top={40} $w={96} $h={37} $line="#6d6a2c">
                  <SlicerHead $size={12} $h={19}>Date<ChevronDown size={12} strokeWidth={1} /></SlicerHead>
                  <SlicerInput>07 May 2018<ChevronDown size={10} /></SlicerInput>
                </Slicer>
                <Slicer $top={30} $w={107} $h={35} $line="#6a7f30">
                  <SlicerHead $size={8.500} $h={14}>Start_Time</SlicerHead>
                  <SlicerInput $h={15}>06:01:00<ChevronDown size={10} /></SlicerInput>
                </Slicer>
                <Slicer $top={19} $w={107} $h={35} $line="#6a7f30">
                  <SlicerHead $size={8.500} $h={14}>End_Time<ChevronDown size={9} /></SlicerHead>
                  <SlicerInput $h={15}>06:11:00<ChevronDown size={10} /></SlicerInput>
                </Slicer>
              </SidePanel>

              <CardFrame $x={161} $y={183} $w={104} $h={71}>
                <KpiCard><KpiName>Species_Count</KpiName><KpiValue>12</KpiValue></KpiCard>
              </CardFrame>
              <CardFrame $x={265} $y={183} $w={105} $h={71}>
                <KpiCard><KpiName>Sum of Humidity</KpiName><KpiValue>678....</KpiValue></KpiCard>
              </CardFrame>
              <CardFrame $x={370} $y={183} $w={104} $h={71}>
                <KpiCard><KpiName>Avg_Temp</KpiName><KpiValue>16.7...</KpiValue></KpiCard>
              </CardFrame>

              <ParamBox $x={154} $y={256} $w={315} $h={66}>
                <ParamHead>Parameter<ChevronDown size={7} color="#888" /></ParamHead>
                <ParamButtons>
                  <ParamButton>Species_Count</ParamButton>
                  <ParamButton $on>Sex</ParamButton>
                  <ParamButton>Location_Type</ParamButton>
                </ParamButtons>
              </ParamBox>

              <Visual $x={164} $y={324} $w={290} $h={90}>
                <VisualTitle>Sum of Temperature</VisualTitle>
                <GaugeRow>
                  <GaugeEdge>0.00</GaugeEdge>
                  <GaugeWrap>
                    <svg width="143" height="72" viewBox="0 0 143 72" style={{ display: 'block' }}>
                      <path d="M0 72A71.500 71.500 0 0 1 71.500 .5V22A50 50 0 0 0 21.500 72Z" fill="#e0c232" />
                      <path d="M143 72A71.500 71.500 0 0 0 71.500 .5V22A50 50 0 0 1 121.500 72Z" fill="#f1f0ee" />
                    </svg>
                    <GaugeValue>200.40</GaugeValue>
                  </GaugeWrap>
                  <GaugeEdge>400.80</GaugeEdge>
                </GaugeRow>
              </Visual>
              <ResizeHint $x={428} $y={413} $w={11} $h={4} />

              <ChartBox $x={161} $y={423} $w={313} $h={114}>
                <VisualTitle $after={2}>Count of Plot_Name by AOU_Code</VisualTitle>
                <PlotChart />
              </ChartBox>

              <Visual $x={477} $y={177} $w={320} $h={124}>
                <VisualTitle>Disturbance and Distance</VisualTitle>
                <MapLegend><b>Distance</b><Dot $c="#e8713a" /> &lt;= 50 Meters <Dot $c="#e86bb8" />50 - 100 Meters</MapLegend>
                <SatelliteMap />
              </Visual>

              <Visual $x={478} $y={307} $w={145} $h={105}>
                <VisualTitle>Count of Location ID by<br />ID_Method</VisualTitle>
                <svg width="145" height="80" viewBox="0 0 145 80" style={{ position: 'absolute', left: 0, top: 25 }}>
                  <path d={ring(49, 40, 28, 17, 60, 300)} fill="#e0c232" />
                  <path d={ring(49, 40, 28, 17, 300, 420)} fill="#0d400c" />
                </svg>
                <DataTag $x={22} $y={35}>4<br />(33.33%)</DataTag>
                <DataTag $x={54} $y={65}>8<br />(66.67%)</DataTag>
                <Legend $x={100} $y={25}>
                  <b>ID Method</b>
                  <LegendItem><Dot $c="#e0c232" />Singing</LegendItem>
                  <LegendItem><Dot $c="#0d400c" />Calling</LegendItem>
                </Legend>
              </Visual>

              <BarBox $x={628} $y={306} $w={175} $h={108}>
                <VisualTitle>Count of Location_Type by<br />Interval_Length</VisualTitle>
                <BarAxisName>Count of Locati...</BarAxisName>
                <AxisTick $y={43}>5</AxisTick>
                <AxisTick $y={72}>0</AxisTick>
                <BarPlot>
                  <BarSlot><BarFill $h={35} $c="#e8d46a"><BarInnerTag>6</BarInnerTag></BarFill></BarSlot>
                  <BarSlot>3<BarFill $h={17} $c="#0a4a0f" /></BarSlot>
                  <BarSlot>2<BarFill $h={12} $c="#000" /></BarSlot>
                  <BarSlot>1<BarFill $h={6} $c="#0a3308" /></BarSlot>
                </BarPlot>
                <BarLabels>
                  <span>0 - 2.5<br />min</span><span>2.5 - 5<br />min</span><span>5 - 7.5<br />min</span><span>7.5 - 10<br />min</span>
                </BarLabels>
              </BarBox>

              <Visual $x={631} $y={416} $w={172} $h={120}>
                <VisualTitle>Count of Sex by Sex</VisualTitle>
                <svg width="172" height="120" viewBox="0 0 172 120" style={{ position: 'absolute', left: 0, top: 0 }}>
                  <path d={ring(59, 66.500, 35.500, 22, 0, 240)} fill="#e0c232" />
                  <path d={ring(59, 66.500, 35.500, 22, 240, 360)} fill="#0d400c" />
                  <rect x="18" y="20" width="12.500" height="90" fill="#fff" />
                  <path d="M36 23h4l3 5M50 103l3 2h-8" stroke="#d8d8d8" fill="none" />
                </svg>
                <SexNote>8<span>(66.67%)</span></SexNote>
                <Legend $x={118} $y={45}>
                  <b>Sex</b>
                  <LegendItem><Dot $c="#e0c232" />Undeter...</LegendItem>
                  <LegendItem><Dot $c="#0d400c" />Male</LegendItem>
                </Legend>
              </Visual>

              <Visual $x={477} $y={416} $w={180} $h={122}>
                <VisualTitle>Count of Observer by Observer<br />and Visit</VisualTitle>
                <ObsHead>SOSP</ObsHead>
                <ObsRow><Dot $c="#0d4a16" $size={10} /><ObsName>Count of Plot_Name</ObsName><ObsCount>1</ObsCount></ObsRow>
                <ObsAxis><span>0</span><span>5</span><span>10</span></ObsAxis>
                <ObsAxisName>Count of Observer</ObsAxisName>
              </Visual>

              <PageEnd $x={43} $y={539} $w={760} $h={2} />
            </Canvas>

            <FiltersPane>
              <PaneHead $pad="0 10px 0 13px" $gap={9}>
                <FilterIcon />Filters
                <PushRight $gap={19}><EyeIcon /><ChevronsRight size={12} strokeWidth={3} /></PushRight>
              </PaneHead>
              <FilterSearch><Search size={12} strokeWidth={1.500} />Search</FilterSearch>
              <FilterRule />
              <FilterSection $top={16}>Filters on this page<MoreHorizontal size={10} /></FilterSection>
              <DropCard>Add data fields here</DropCard>
              <FilterSection $top={25}>Filters on all pages<MoreHorizontal size={10} /></FilterSection>
              <DropCard>Add data fields here</DropCard>
            </FiltersPane>
          </MainTop>
          <PageBar>
            <ViewButton $on><Monitor size={19} strokeWidth={1.100} /></ViewButton>
            <ViewButton $gap={20}><Smartphone size={20} strokeWidth={1.100} color="#6a4a40" /></ViewButton>
            <PageNav><NavArrow /><NavArrow flip /></PageNav>
            <PageTab>Page 1</PageTab>
            <AddPage><Plus size={15} strokeWidth={3} /></AddPage>
          </PageBar>
        </Main>

        <VizPane>
          <PaneHead $pad="0 8px 0 8px">Visualizations<PushRight><ChevronsRight size={12} strokeWidth={3} /></PushRight></PaneHead>
          <SubHead $top={8}>Build visual</SubHead>
          <BuildTabs>
            <BuildActive><BuildIcon /></BuildActive>
            <FormatIcon />
          </BuildTabs>
          <Notch />
          <VizGrid>
            {vizIcons.map((c, i) => <Ico key={i}>{c}</Ico>)}
          </VizGrid>
          <VizDots><MoreHorizontal size={13} /></VizDots>
          <VizRule />
          <FieldLabel>Values</FieldLabel>
          <DashedDrop $top={7} $h={27}>Add data fields here</DashedDrop>
          <SubHead $top={11} $left={11}>Drill through</SubHead>
          <ToggleRow $top={9}>Cross-report<Toggle>Off</Toggle></ToggleRow>
          <ToggleRow $top={11}>Keep all filters<Toggle $on>On</Toggle></ToggleRow>
          <DashedDrop $top={10} $h={26} $left={8}>Add drill-through fields here</DashedDrop>
        </VizPane>

        <DataPane>
          <PaneHead>Data<PushRight><ChevronsRight size={12} strokeWidth={3} /></PushRight></PaneHead>
          <DataSearch><Search size={15} strokeWidth={1.200} color="#444" />Search</DataSearch>
          <TreeRow $top={9}><ChevronRight size={10} /><TableGlyph />Grass_Land</TreeRow>
          <TreeRow><ChevronRight size={10} /><CalcTableGlyph />Parameter</TreeRow>
        </DataPane>
      </Workspace>

      <StatusBar>
        Page 1 of 1
        <ZoomBar>
          <span>-</span>
          <ZoomTrack />
          <Plus size={11} />
          <ZoomValue>60%</ZoomValue>
          <svg width="14" height="12" viewBox="0 0 14 12" fill="none"><path d="M.5.5h13v11h-13zM3 4v-1.500h2M11 4v-1.500h-2M3 8v1.500h2M11 8v1.500h-2" stroke="#444" /></svg>
        </ZoomBar>
      </StatusBar>

      <Taskbar>
        <StartButton>
          <svg width="16" height="16" viewBox="0 0 16 16" fill="#fff"><path d="M0 2.200l6.500-.9v6.300h-6.500zM7.400 1.200l8.600-1.200v7.600h-8.600zM0 8.400h6.500v6.300l-6.500-.9zM7.400 8.400h8.600v7.600l-8.600-1.200z" /></svg>
        </StartButton>
        <TaskSearch>
          <Search size={18} strokeWidth={1.200} color="#222" style={{ transform: 'scaleX(-1)' }} />
          Type here to search
          <SparkleIcon width="56" height="30" viewBox="0 0 56 30" fill="none">
            <path d="M24 1l3 10 9 3-9 3-3 11-3-11-9-3 9-3z" fill="#ffc83d" />
            <path d="M44 12l1.500 4.500 4 1.500-4 1.500-1.500 5-1.500-5-4-1.500 4-1.500z" fill="#ffc83d" />
            <path d="M4 20l1.500 3 3 1-3 1-1.500 4-1.500-4-3-1 3-1z" fill="#2a9fe8" />
            <circle cx="39" cy="4" r="2" fill="#e8622a" /><circle cx="53" cy="26" r="2" fill="#7cc24e" />
          </SparkleIcon>
        </TaskSearch>
        <TaskApps>
          {apps.map((a, i) => <TaskApp key={i} $open={i >= 1} $active={i === 8}>{a}</TaskApp>)}
        </TaskApps>
        <Tray>
          <ChevronUp size={14} />
          <svg width="17" height="15" viewBox="0 0 17 15"><circle cx="7" cy="7.500" r="6" fill="#c4c4c4" /><circle cx="12" cy="9.500" r="5" fill="#2a9fe8" /><path d="M11 8h2v5h-2zM11 5.500h2v1.500h-2z" fill="#fff" /></svg>
          <svg width="17" height="15" viewBox="0 0 17 15" fill="none"><path d="M4.500 1.500h12v9h-12zM1 1h5v5h-5zM10.500 10.500v3.500M6.500 14h8" stroke="#fff" /></svg>
          <svg width="16" height="15" viewBox="0 0 16 15" fill="none"><path d="M1 5h3l4-3v11l-4-3h-3zM10 5c1 1 1 4 0 5M12 3c2 2 2 7 0 9M14 1.500c3 3 3 9 0 12" stroke="#fff" strokeWidth=".9" /></svg>
          <span>ENG</span>
          <ClockBox>20:51<br />05-03-2025</ClockBox>
          <svg width="16" height="16" viewBox="0 0 16 16" fill="none"><path d="M.5.500h15v12h-5l-2.500 3-2.500-3h-5z" stroke="#fff" /></svg>
        </Tray>
      </Taskbar>
    </Shell>
  );
}
